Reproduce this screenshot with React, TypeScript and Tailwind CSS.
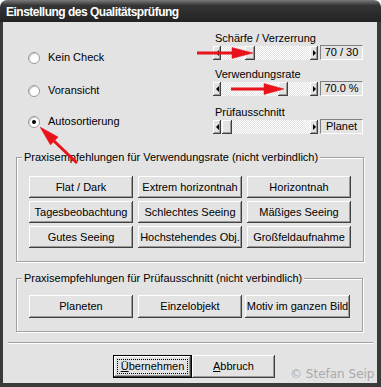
import React from "react";

const raised =
  "bg-[#e3e3e3] shadow-[inset_-1px_-1px_0_#404040,inset_1px_1px_0_#ffffff,inset_-2px_-2px_0_#9a9a9a]";

function Btn({ children, className = "" }: { children?: React.ReactNode; className?: string }) {
  return (
    <div className={`flex items-center justify-center whitespace-nowrap ${raised} ${className}`}>
      {children}
    </div>
  );
}

function Radio({ label, checked, className = "" }: { label: string; checked?: boolean; className?: string }) {
  return (
    <div className={`flex h-[13px] items-center ${className}`}>
      <div className="flex h-[12px] w-[12px] items-center justify-center rounded-full border border-[#9a9a9a] bg-white shadow-[inset_1px_1px_1px_#c8c8c8]">
        {checked && <div className="h-[4px] w-[4px] rounded-full bg-black" />}
      </div>
      <span className="ml-[8px] leading-[13px]">{label}</span>
    </div>
  );
}

function Slider({ thumb, value }: { thumb: number; value: string }) {
  return (
    <div className="flex items-end">
      <div className="flex h-[14px] w-[105px]">
        <Btn className="h-[14px] w-[8px]">
          <div className="h-0 w-0 border-y-[3px] border-r-[3px] border-y-transparent border-r-black" />
        </Btn>
        <div className="flex flex-1 bg-[image:repeating-conic-gradient(#ffffff_0%_25%,#e2e2e2_0%_50%)] bg-[length:2px_2px]">
          <div style={{ width: thumb }} />
          <Btn className="h-[14px] w-[10px]" />
        </div>
        <Btn className="h-[14px] w-[8px]">
          <div className="h-0 w-0 border-y-[3px] border-l-[3px] border-y-transparent border-l-black" />
        </Btn>
      </div>
      <div className="ml-[2px] flex h-[15px] w-[43px] items-center justify-center border border-t-[#808080] border-l-[#808080] border-b-white border-r-white leading-[13px]">
        {value}
      </div>
    </div>
  );
}

function Group({
  legend,
  className = "",
  children,
}: {
  legend: string;
  className?: string;
  children: React.ReactNode;
}) {
  return (
    <fieldset
      className={`ml-[13px] w-[347px] border border-[#a0a0a0] p-0 shadow-[inset_1px_1px_0_#ffffff,1px_1px_0_#ffffff] ${className}`}
    >
      <legend className="ml-[5px] bg-[#e3e3e3] px-[2px] leading-[13px]">{legend}</legend>
      {children}
    </fieldset>
  );
}

export default function App() {
  return (
    <div className="relative h-[387px] w-[381px] overflow-hidden bg-white font-['Liberation_Sans',Arial,sans-serif] text-[11px] text-black">
      <div className="flex h-full flex-col">
        <div className="flex h-[22px] items-center rounded-t-[7px] bg-linear-to-b from-[#7a7a7a] via-[#353535] via-[25%] to-[#232323] pl-[6px] pt-[1px]">
          <span className="text-[12px] font-bold tracking-[-0.5px] text-white">
            Einstellung des Qualitätsprüfung
          </span>
        </div>
        <div className="flex flex-1 flex-col border-b-[4px] border-l-[3px] border-r-[4px] border-[#3a3a3a] bg-[#e3e3e3]">
          <div className="flex">
            <div className="w-[210px] pl-[25px]">
              <Radio label="Kein Check" className="mt-[29px]" />
              <Radio label="Voransicht" className="mt-[20px]" />
              <Radio label="Autosortierung" checked className="mt-[18px]" />
            </div>
            <div className="pt-[10px]">
              <div className="pl-[2px] leading-[13px]">Schärfe / Verzerrung</div>
              <Slider thumb={24} value="70 / 30" />
              <div className="mt-[8px] pl-[2px] leading-[13px]">Verwendungsrate</div>
              <Slider thumb={57} value="70.0 %" />
              <div className="mt-[10px] pl-[2px] leading-[13px]">Prüfausschnitt</div>
              <Slider thumb={1} value="Planet" />
            </div>
          </div>

          <Group legend="Praxisempfehlungen für Verwendungsrate (nicht verbindlich)" className="mt-[17px]">
            <div className="grid grid-cols-[104px_104px_104px] gap-x-[5px] gap-y-[3px] px-[12px] pb-[13px] pt-[12px]">
              {[
                "Flat / Dark",
                "Extrem horizontnah",
                "Horizontnah",
                "Tagesbeobachtung",
                "Schlechtes Seeing",
                "Mäßiges Seeing",
                "Gutes Seeing",
                "Hochstehendes Obj.",
                "Großfeldaufnahme",
              ].map((t) => (
                <Btn key={t} className="h-[22px]">
                  {t}
                </Btn>
              ))}
            </div>
          </Group>

          <Group legend="Praxisempfehlungen für Prüfausschnitt (nicht verbindlich)" className="mt-[10px]">
            <div className="flex px-[12px] pb-[13px] pt-[10px]">
              <Btn className="h-[23px] w-[104px]">Planeten</Btn>
              <Btn className="ml-[5px] h-[23px] w-[104px]">Einzelobjekt</Btn>
              <Btn className="ml-[3px] h-[23px] w-[105px]">Motiv im ganzen Bild</Btn>
            </div>
          </Group>

          <div className="ml-[5px] mt-[10px] h-[2px] w-[365px] border-b border-t border-b-white border-t-[#a0a0a0]" />

          <div className="ml-[110px] mt-[11px] flex h-[23px]">
            <div className="flex h-[23px] w-[79px] border border-black">
              <Btn className="relative h-full w-full">
                <div className="absolute inset-[3px] border border-dotted border-black" />
                <span>
                  <span className="underline">Ü</span>bernehmen
                </span>
              </Btn>
            </div>
            <Btn className="h-[23px] w-[83px]">
              <span>
                <span className="underline">A</span>bbruch
              </span>
            </Btn>
            <span className="-mb-[3px] ml-[15px] self-end whitespace-nowrap font-['DejaVu_Sans',sans-serif] text-[12px] leading-[14px] text-[#aaaaaa]">
              © Stefan Seip
            </span>
          </div>
        </div>
      </div>

      <svg className="pointer-events-none absolute inset-0" width="381" height="387" viewBox="0 0 381 387">
        <g fill="#e8131b" stroke="#e8131b">
          <line x1="197" y1="53" x2="236" y2="53" strokeWidth="3" />
          <polygon points="232,47.5 253,53 232,58.5" strokeWidth="0.5" />
          <line x1="231" y1="89" x2="268" y2="89" strokeWidth="3" />
          <polygon points="264,83.5 284,89 264,94.5" strokeWidth="0.5" />
          <line x1="77" y1="163" x2="54" y2="141" strokeWidth="3" />
          <polygon points="58.1,137.1 40,127 50.5,144.9" strokeWidth="0.5" />
        </g>
      </svg>
    </div>
  );
}
